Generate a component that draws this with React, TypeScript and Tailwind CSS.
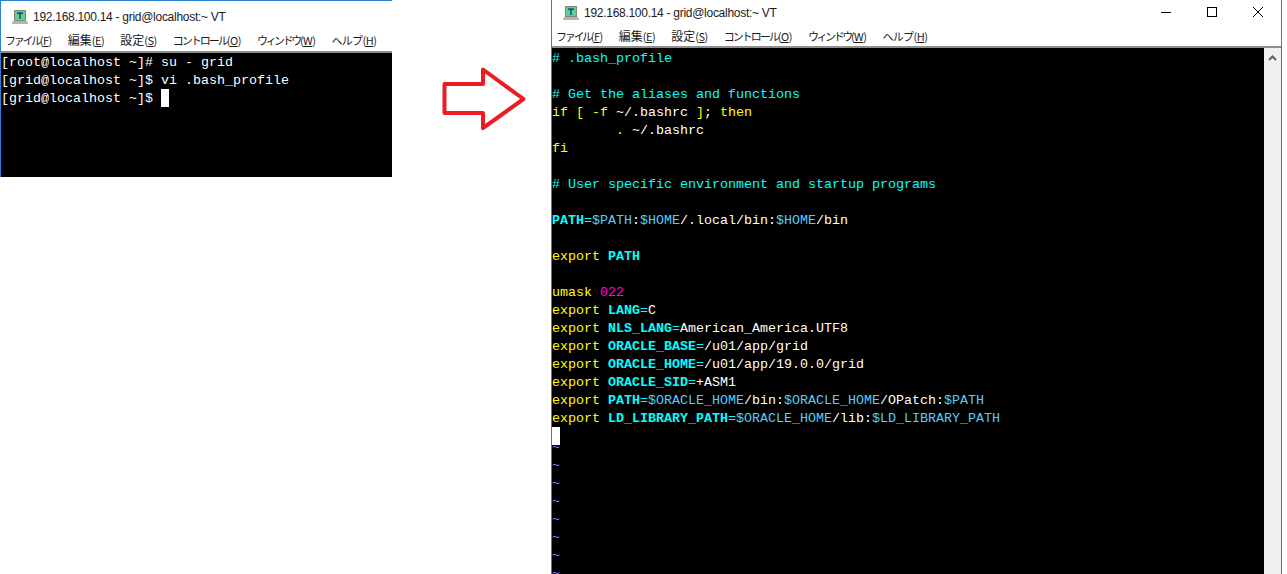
import type { ReactNode } from 'react';

const MENU = [
  { kana: 'ファイル', key: 'F', cls: 'tracking-[-2.3px]' },
  { kana: '編集', key: 'E', cls: 'text-[12px] tracking-normal' },
  { kana: '設定', key: 'S', cls: 'text-[12px] tracking-normal' },
  { kana: 'コントロール', key: 'O', cls: 'tracking-[-2px]' },
  { kana: 'ウィンドウ', key: 'W', cls: 'tracking-[-2.4px]' },
  { kana: 'ヘルプ', key: 'H', cls: 'tracking-[-0.7px]' },
];

const C = 'text-[#00ffff]';
const Y = 'text-[#ffff00]';
const W = 'text-white';
const V = 'text-[#55ccff]';
const M = 'text-[#ff00ff]';

type Seg = [string, string, boolean?];

const LINES: Seg[][] = [
  [['# .bash_profile', C]],
  [],
  [['# Get the aliases and functions', C]],
  [['if [ -f ', Y], ['~/.bashrc ', W], [']', Y], ['; ', W], ['then', Y]],
  [['        . ', Y], ['~/.bashrc', W]],
  [['fi', Y]],
  [],
  [['# User specific environment and startup programs', C]],
  [],
  [['PATH', C, true], ['=', C], ['$PATH', V], [':', W], ['$HOME', V], ['/.local/bin:', W], ['$HOME', V], ['/bin', W]],
  [],
  [['export ', Y], ['PATH', C, true]],
  [],
  [['umask ', Y], ['022', M]],
  [['export ', Y], ['LANG', C, true], ['=', C], ['C', W]],
  [['export ', Y], ['NLS_LANG', C, true], ['=', C], ['American_America.UTF8', W]],
  [['export ', Y], ['ORACLE_BASE', C, true], ['=', C], ['/u01/app/grid', W]],
  [['export ', Y], ['ORACLE_HOME', C, true], ['=', C], ['/u01/app/19.0.0/grid', W]],
  [['export ', Y], ['ORACLE_SID', C, true], ['=', C], ['+ASM1', W]],
  [['export ', Y], ['PATH', C, true], ['=', C], ['$ORACLE_HOME', V], ['/bin:', W], ['$ORACLE_HOME', V], ['/OPatch:', W], ['$PATH', V]],
  [['export ', Y], ['LD_LIBRARY_PATH', C, true], ['=', C], ['$ORACLE_HOME', V], ['/lib:', W], ['$LD_LIBRARY_PATH', V]],
];

function AppIcon() {
  return (
    <svg width="16" height="16" viewBox="0 0 16 16" className="shrink-0">
      <path d="M1 12h14l1 3H0z" fill="#b4b4b4" />
      <rect x="2" y="1" width="12" height="11" fill="#7c8c6c" />
      <rect x="3" y="2" width="10" height="9" fill="#5fd08a" />
      <path d="M5 3.5h6v1.2H8.6V10H7.4V4.7H5z" fill="#1818c0" />
    </svg>
  );
}

function TitleBar({ className }: { className: string }) {
  return (
    <div className={`flex shrink-0 items-center font-['Liberation_Sans','Noto_Sans_CJK_JP',sans-serif] text-[12px] text-[#1a1a1a] ${className}`}>
      <AppIcon />
      <span className="ml-[5px] tracking-[-0.28px]">192.168.100.14 - grid@localhost:~ VT</span>
    </div>
  );
}

function MenuBar({ className }: { className: string }) {
  return (
    <div className={`flex shrink-0 items-center gap-[16px] border-b-[2px] border-[#8f8f8f] bg-white pl-[4px] font-['Noto_Sans_CJK_JP',sans-serif] text-[11px] text-[#1a1a1a] box-content ${className}`}>
      {MENU.map((item) => (
        <span key={item.key} className="whitespace-nowrap">
          <span className={item.cls}>{item.kana}</span>
          <span className="tracking-[-0.5px]">(<span className="underline">{item.key}</span>)</span>
        </span>
      ))}
    </div>
  );
}

function Term({ children, className = '' }: { children: ReactNode; className?: string }) {
  return (
    <div className={`bg-black font-['Liberation_Mono',monospace] text-[13.33px] leading-[18px] whitespace-pre ${className}`}>
      {children}
    </div>
  );
}

function Cursor() {
  return <span className="-mt-px inline-block h-[18px] w-[8px] bg-white align-top" />;
}

export default function App() {
  return (
    <div className="flex h-[574px] w-[1287px] items-start overflow-hidden bg-white">
      <div className="flex h-[177px] w-[392px] flex-col border-t border-l border-[#2b7fd0] bg-white">
        <TitleBar className="h-[28px] pl-[11px] pt-[4px]" />
        <MenuBar className="h-[22px]" />
        <Term className="flex-1 pt-[1px] text-white">
          <div>[root@localhost ~]# su - grid</div>
          <div>[grid@localhost ~]$ vi .bash_profile</div>
          <div>[grid@localhost ~]$ <Cursor /></div>
        </Term>
      </div>

      <svg width="88" height="66" viewBox="0 0 88 66" className="ml-[50px] mt-[66px] shrink-0">
        <path d="M2.5 18H41V3.5L81.5 33L41 62V47H2.5Z" fill="none" stroke="#ed1c24" strokeWidth="4" strokeLinejoin="round" />
      </svg>

      <div className="ml-[21px] flex h-[574px] w-[731px] shrink-0 flex-col border-x border-[#2b7fd0] bg-white">
        <div className="flex h-[25px] shrink-0 items-start justify-between">
          <TitleBar className="h-[25px] pl-[11px] pt-[1px]" />
          <div className="flex items-center gap-[36px] pr-[18px] pt-[7px] text-black">
            <svg width="10" height="10" viewBox="0 0 10 10"><path d="M0 5.5h10" stroke="currentColor" /></svg>
            <svg width="10" height="10" viewBox="0 0 10 10"><rect x="0.5" y="0.5" width="9" height="9" fill="none" stroke="currentColor" /></svg>
            <svg width="10" height="10" viewBox="0 0 10 10"><path d="M0 0l10 10M10 0L0 10" stroke="currentColor" /></svg>
          </div>
        </div>
        <MenuBar className="h-[20px] pt-[1px]" />
        <div className="flex min-h-0 flex-1">
          <Term className="min-w-0 flex-1 overflow-hidden pt-[2px]">
            {LINES.map((line, i) => (
              <div key={i} className="h-[18px]">
                {line.map(([text, color, bold], j) => (
                  <span key={j} className={`${color} ${bold ? 'font-bold' : ''}`}>{text}</span>
                ))}
              </div>
            ))}
            <div className="h-[18px]"><Cursor /></div>
            {Array.from({ length: 8 }).map((_, i) => (
              <div key={i} className="h-[18px] leading-[4px] text-[#7f7fff]">~</div>
            ))}
          </Term>
          <div className="flex w-[17px] shrink-0 justify-center bg-[#f0f0f0] pt-[7px]">
            <svg width="9" height="6" viewBox="0 0 9 6"><path d="M1 5l3.5-3.5L8 5" fill="none" stroke="#606060" strokeWidth="2" /></svg>
          </div>
        </div>
      </div>
    </div>
  );
}
